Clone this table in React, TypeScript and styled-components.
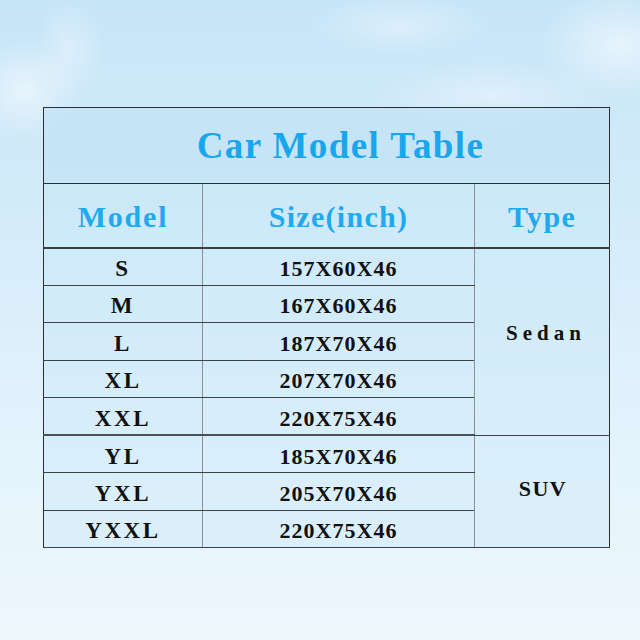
import styled, { createGlobalStyle } from "styled-components";

const GlobalStyle = createGlobalStyle`
    html, body {
        margin: 0;
        padding: 0;
    }
`;

const Sky = styled.div`
    width: 640px;
    height: 640px;
    box-sizing: border-box;
    padding: 107px 0 0 43px;
    font-family: "Liberation Serif", "Times New Roman", serif;
    background:
        radial-gradient(ellipse 55px 50px at 25px 90px, rgba(255, 255, 255, 0.55), rgba(255, 255, 255, 0) 100%),
        radial-gradient(ellipse 35px 50px at 70px 50px, rgba(255, 255, 255, 0.35), rgba(255, 255, 255, 0) 100%),
        radial-gradient(ellipse 90px 30px at 400px 25px, rgba(255, 255, 255, 0.35), rgba(255, 255, 255, 0) 100%),
        radial-gradient(ellipse 80px 55px at 620px 45px, rgba(255, 255, 255, 0.55), rgba(255, 255, 255, 0) 100%),
        radial-gradient(ellipse 120px 35px at 490px 95px, rgba(255, 255, 255, 0.35), rgba(255, 255, 255, 0) 100%),
        linear-gradient(180deg, #c7e5f8 0%, #d2ebf9 30%, #e2f2fc 65%, #eef8fd 100%);
`;

const Table = styled.table`
    border-collapse: collapse;
    table-layout: fixed;
    width: 566px;
    border: 1.5px solid #2b2f33;
    background: rgba(195, 228, 247, 0.35);
`;

const Col = styled.col<{ $w: number }>`
    width: ${(p) => p.$w}px;
`;

const TitleCell = styled.th`
    height: 75px;
    padding: 0 0 0 28px;
    border-bottom: 1.5px solid #2b2f33;
    color: #19a6ec;
    font-size: 37px;
    font-weight: bold;
    letter-spacing: 1.4px;
    text-align: center;
    vertical-align: middle;
    background: rgba(190, 226, 247, 0.45);
`;

const HeadCell = styled.th`
    height: 64px;
    padding: 4px 0 0;
    box-sizing: border-box;
    border-bottom: 2px solid #3a3f44;
    border-left: 1px solid #8a9196;
    color: #1fa9ee;
    font-size: 30px;
    font-weight: bold;
    letter-spacing: 1.3px;
    text-align: center;
    vertical-align: middle;
    &:first-child {
        border-left: none;
        letter-spacing: 1.8px;
    }
`;

const Row = styled.tr<{ $last?: boolean }>`
    height: 37.5px;
    & > td {
        border-bottom: ${(p) => (p.$last ? "2px solid #4a4f54" : "1.5px solid #3e4348")};
    }
`;

const ModelCell = styled.td`
    padding: 5px 0 0;
    color: #111;
    font-size: 23px;
    font-weight: bold;
    letter-spacing: 2.6px;
    text-align: center;
    vertical-align: middle;
`;

const SizeCell = styled.td`
    padding: 5px 0 0;
    border-left: 1px solid #8a9196;
    color: #111;
    font-size: 22px;
    font-weight: bold;
    letter-spacing: 1px;
    text-align: center;
    vertical-align: middle;
`;

const TypeCell = styled.td<{ $size: number; $spacing: number; $lift: number; $indent: number }>`
    padding: 0 0 ${(p) => p.$lift}px ${(p) => p.$indent}px;
    border-left: 1px solid #8a9196;
    color: #111;
    font-size: ${(p) => p.$size}px;
    font-weight: bold;
    letter-spacing: ${(p) => p.$spacing}px;
    text-align: center;
    vertical-align: middle;
    border-bottom: 1.5px solid #3e4348 !important;
`;

type Group = {
    type: string;
    size: number;
    spacing: number;
    lift: number;
    indent: number;
    rows: [string, string][];
};

const groups: Group[] = [
    {
        type: "Sedan",
        size: 21,
        spacing: 5,
        lift: 16,
        indent: 8,
        rows: [
            ["S", "157X60X46"],
            ["M", "167X60X46"],
            ["L", "187X70X46"],
            ["XL", "207X70X46"],
            ["XXL", "220X75X46"],
        ],
    },
    {
        type: "SUV",
        size: 22,
        spacing: 1.5,
        lift: 4,
        indent: 2,
        rows: [
            ["YL", "185X70X46"],
            ["YXL", "205X70X46"],
            ["YXXL", "220X75X46"],
        ],
    },
];

const App = () => {
    return (
        <>
            <GlobalStyle />
            <Sky>
                <Table>
                    <colgroup>
                        <Col $w={159} />
                        <Col $w={272} />
                        <Col $w={135} />
                    </colgroup>
                    <thead>
                        <tr>
                            <TitleCell colSpan={3}>Car Model Table</TitleCell>
                        </tr>
                        <tr>
                            <HeadCell>Model</HeadCell>
                            <HeadCell>Size(inch)</HeadCell>
                            <HeadCell>Type</HeadCell>
                        </tr>
                    </thead>
                    <tbody>
                        {groups.map((g, gi) =>
                            g.rows.map(([model, size], i) => (
                                <Row key={model} $last={i === g.rows.length - 1 && gi === 0}>
                                    <ModelCell>{model}</ModelCell>
                                    <SizeCell>{size}</SizeCell>
                                    {i === 0 && (
                                        <TypeCell
                                            rowSpan={g.rows.length}
                                            $size={g.size}
                                            $spacing={g.spacing}
                                            $lift={g.lift}
                                            $indent={g.indent}
                                        >
                                            {g.type}
                                        </TypeCell>
                                    )}
                                </Row>
                            ))
                        )}
                    </tbody>
                </Table>
            </Sky>
        </>
    );
};

export default App;
